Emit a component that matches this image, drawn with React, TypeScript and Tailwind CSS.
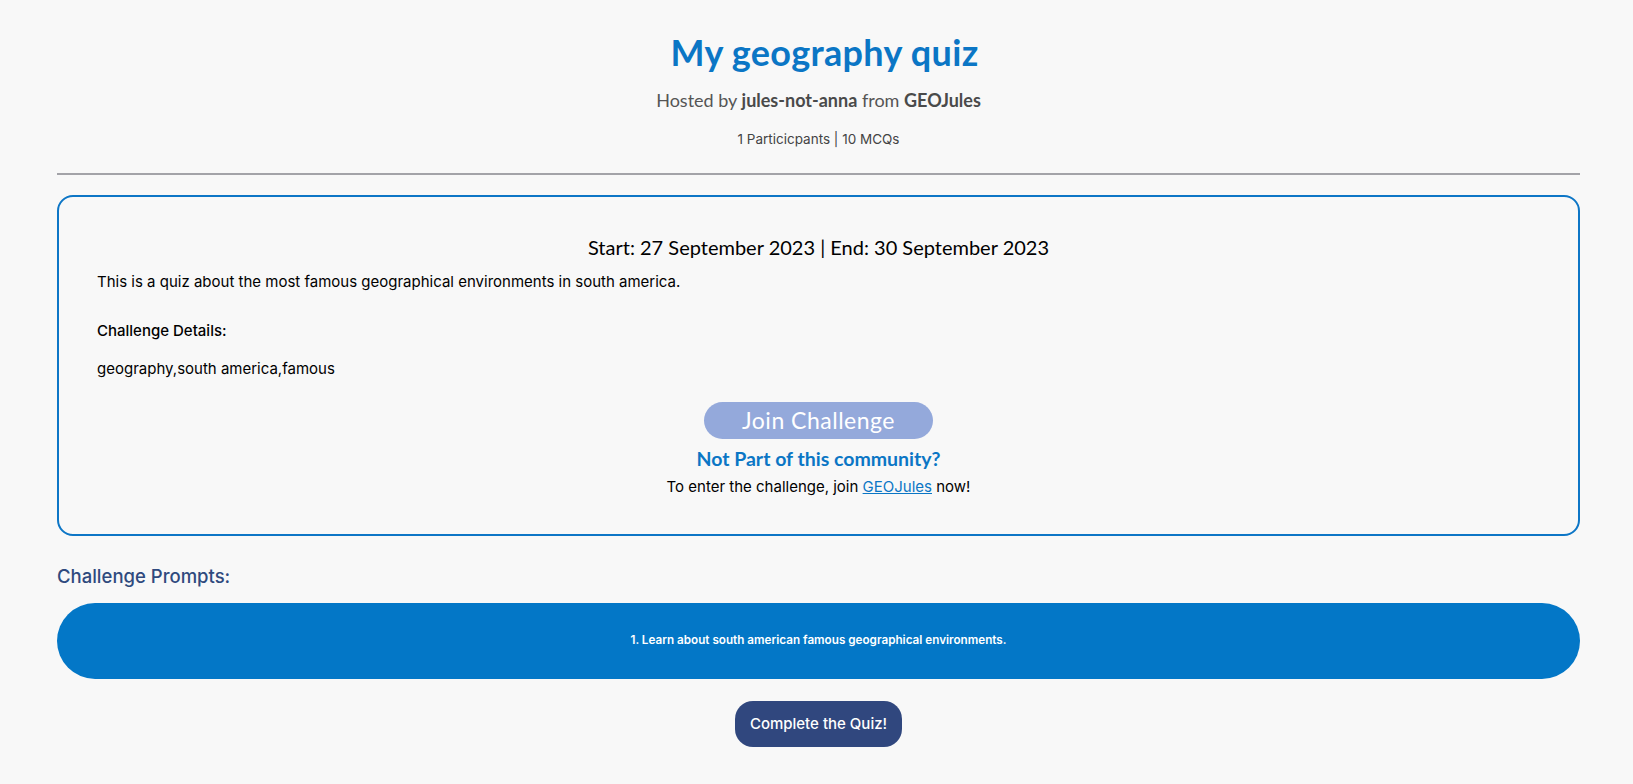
import React from "react";

export default function App() {
  return (
    <div className="min-h-[784px] w-full bg-[#f8f8f8] pb-[37px] pl-[57px] pr-[53px] font-[family-name:Inter,Roboto,sans-serif]">
      <div className="w-full flex flex-col items-center">
        <h1 className="mt-[31px] ml-[12px] text-[36px] leading-[42px] font-bold tracking-[0.3px] text-[#0b76c5] font-[family-name:Lato,sans-serif]">
          My geography quiz
        </h1>
        <p className="mt-[15px] text-[18px] leading-[24px] text-[#555] font-[family-name:Lato,sans-serif]">
          Hosted by <span className="font-bold text-[#4a4a4a]">jules-not-anna</span> from{" "}
          <span className="font-bold text-[#4a4a4a]">GEOJules</span>
        </p>
        <p className="mt-[17px] text-[13.5px] leading-[20px] text-[#444]">
          1 Particicpants | 10 MCQs
        </p>
        <div className="mt-[24px] h-[2px] w-full bg-[#a3a3a8]" />

        <div className="mt-[20px] w-full rounded-[16px] border-2 border-[#0d76c6] px-[38px] pt-[37px] pb-[37px] flex flex-col">
          <p className="self-center text-[20px] leading-[26px] text-black font-[family-name:Lato,sans-serif]">
            Start: 27 September 2023 | End: 30 September 2023
          </p>
          <p className="mt-[12px] text-[15px] leading-[20px] text-black">
            This is a quiz about the most famous geographical environments in south america.
          </p>
          <p className="mt-[29px] text-[15px] leading-[20px] font-medium text-black">
            Challenge Details:
          </p>
          <p className="mt-[18px] text-[15px] leading-[20px] text-black">
            geography,south america,famous
          </p>
          <button className="mt-[23px] self-center h-[37px] w-[229px] rounded-full bg-[#94a9db] text-[23px] leading-[37px] tracking-[0.5px] text-white font-[family-name:Lato,sans-serif]">
            Join Challenge
          </button>
          <p className="mt-[7px] self-center text-[19.5px] leading-[26px] font-bold text-[#0b76c5] font-[family-name:Lato,sans-serif]">
            Not Part of this community?
          </p>
          <p className="mt-[5px] self-center text-[15px] leading-[20px] text-black">
            To enter the challenge, join{" "}
            <a className="text-[#0b76c5] underline" href="#">
              GEOJules
            </a>{" "}
            now!
          </p>
        </div>

        <h2 className="mt-[26px] self-start text-[18.5px] leading-[28px] font-medium text-[#2f4a7e]">
          Challenge Prompts:
        </h2>
        <div className="mt-[13px] h-[76px] w-full rounded-full bg-[#0377c7] flex items-center justify-center">
          <span className="text-[11.7px] font-semibold text-white">
            1. Learn about south american famous geographical environments.
          </span>
        </div>
        <button className="mt-[22px] h-[46px] px-[15px] rounded-[18px] bg-[#30477e] text-[15px] font-medium text-white">
          Complete the Quiz!
        </button>
      </div>
    </div>
  );
}
